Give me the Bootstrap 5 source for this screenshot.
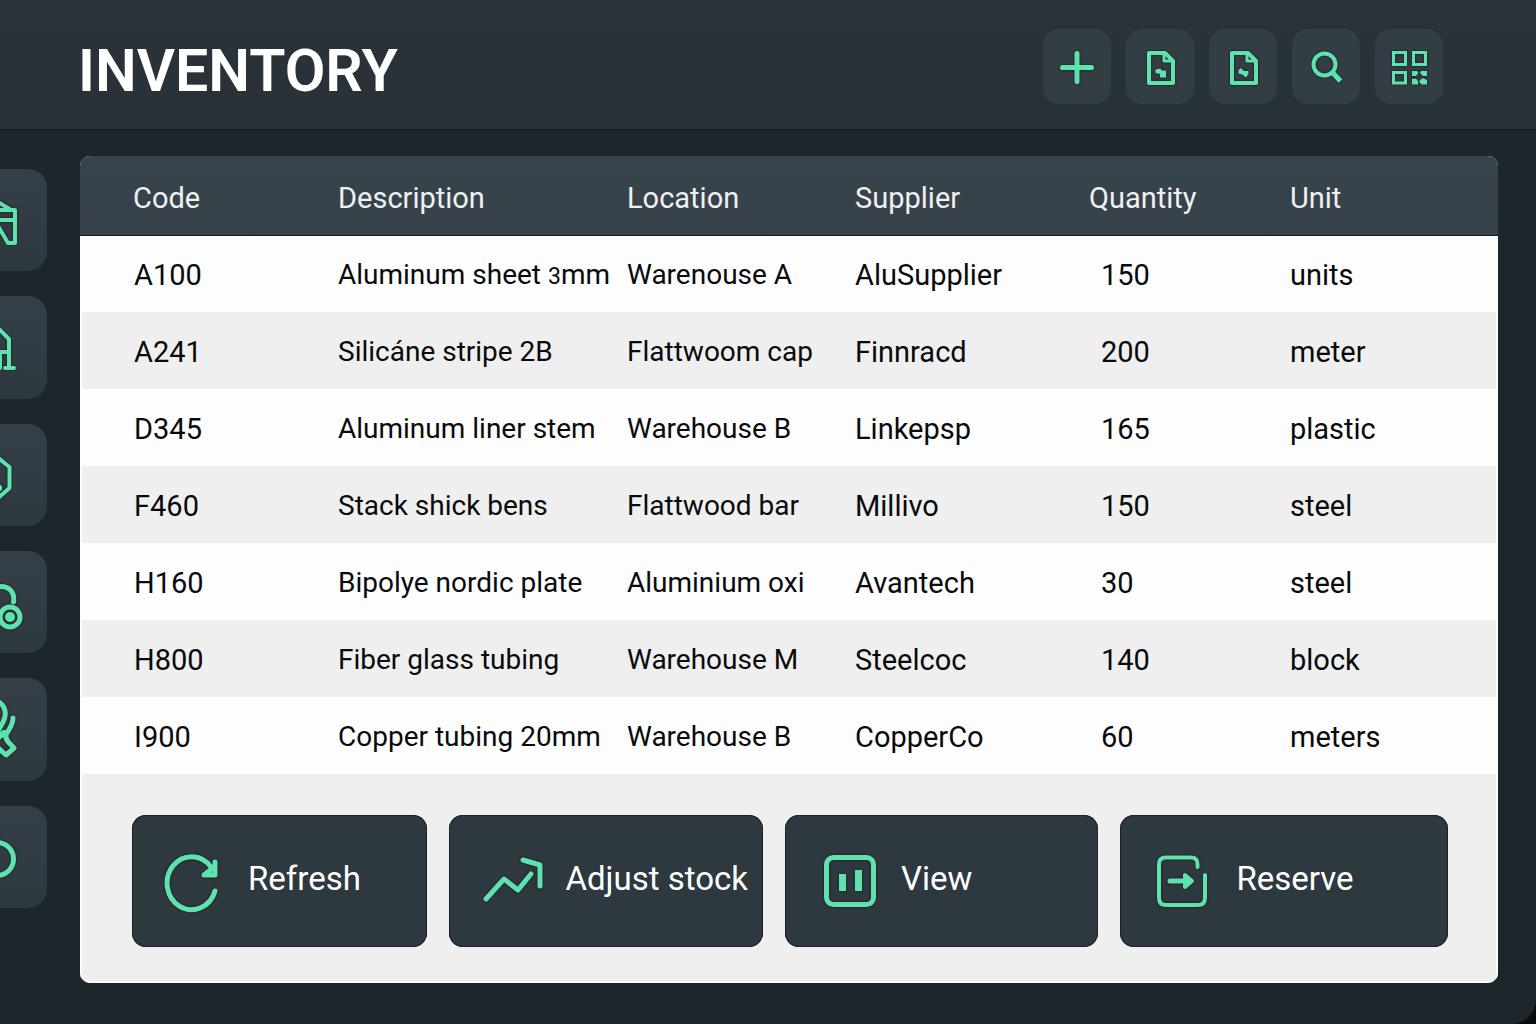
<!DOCTYPE html>
<html lang="en">
<head>
<meta charset="utf-8">
<meta name="viewport" content="width=device-width, initial-scale=1">
<title>Inventory</title>
<link href="https://cdn.jsdelivr.net/npm/bootstrap@5.3.0/dist/css/bootstrap.min.css" rel="stylesheet">
<style>
  body { background: #0c0a0b; font-family: Roboto, "Liberation Sans", sans-serif; }
  .app { background: #1d262b; border-bottom-right-radius: 24px; }
  .topbar { background: linear-gradient(#2a333a, #293138); height: 130px; padding: 0 93px 0 78px; border-bottom: 1px solid #171e22; }
  .topbar h1 { font-size: 59px; line-height: 64px; font-weight: 600; padding-top: 12px; }
  .tools { gap: 15px; padding-top: 3px; }
  .tool { width: 68px; height: 75px; padding: 0; border-radius: 16px; --bs-btn-border-width: 0; --bs-btn-bg: #323d44; --bs-btn-hover-bg: #3b474f; }
  .tool svg { width: 44px; height: 45px; }
  svg { display: block; flex: none; fill: none; stroke: #5ee3ad; stroke-width: 4; stroke-linecap: round; stroke-linejoin: round; filter: drop-shadow(0 0 1px #1a1018); }
  svg.heavy { stroke-width: 5; }
  .solid { fill: #5ee3ad; stroke: none; }
  .workspace { padding: 26px 38px 41px 0; }
  .side { width: 47px; margin-right: 33px; padding: 13px 0 75px; gap: 25px; }
  .side a { background: linear-gradient(#343f47, #2e383f); border-radius: 0 19px 19px 0; overflow: hidden; }
  .side svg { width: 47px; height: 102px; }
  .panel { background: #efefef; border-radius: 10px; overflow: hidden; }
  .stock { table-layout: fixed; border-collapse: separate; border-spacing: 0; font-size: 29px; line-height: 36px; --bs-table-bg: #fdfdfd; --bs-table-color: #080a0c; }
  .stock th, .stock td { padding: 2px 0 0; border: 0; vertical-align: middle; white-space: nowrap; }
  .stock th { height: 80px; padding-top: 5px; font-weight: 400; background: linear-gradient(#38444c, #36414a); color: #eef0f1; border-bottom: 1px solid #141c22; }
  .stock td { height: 77px; }
  .stock tbody tr:first-child td { height: 76px; }
  .stock tbody tr:nth-child(even) { --bs-table-bg: #efefef; }
  .stock th:first-child { padding-left: 53px; }
  .stock td:first-child { padding-left: 52px; border-left: 2px solid #fdfdfd; }
  .stock td:last-child { border-right: 2px solid #fdfdfd; }
  .stock td:nth-child(2), .stock td:nth-child(3) { font-size: 28px; }
  .stock td.qty { padding-left: 12px; }
  .stock .oldstyle { font-size: 23px; line-height: 1; }
  .actions { padding: 41px 48px 34px 50px; gap: 22px; border: solid #fdfdfd; border-width: 0 2px 2px; }
  .action { flex: 281 1 0; height: 132px; padding: 0 0 0 32px; gap: 20px; border-radius: 14px; font-size: 33px; line-height: 40px; white-space: nowrap;
    --bs-btn-border-width: 0; --bs-btn-bg: #2e383f; --bs-btn-color: #fff; --bs-btn-hover-bg: #3a464e; --bs-btn-hover-color: #fff; box-shadow: inset 0 0 0 1px #18222a; }
  .action svg { width: 64px; height: 64px; }
  .action span { padding-bottom: 5px; }
  .action-sm { flex-grow: 263; }
  .action-lg { flex-grow: 295; }
</style>
</head>
<body>
<div class="app min-vh-100 d-flex flex-column">
  <header class="topbar d-flex align-items-center justify-content-between">
    <h1 class="m-0 text-white">INVENTORY</h1>
    <div class="tools d-flex">
      <button type="button" class="tool btn d-flex align-items-center justify-content-center" aria-label="Add">
        <svg viewBox="0 0 44 45" class="heavy"><path d="M22 9.500V37.500M7.500 23.500H36.500"/></svg>
      </button>
      <button type="button" class="tool btn d-flex align-items-center justify-content-center" aria-label="Import file">
        <svg viewBox="0 0 44 45"><path d="M11 9H27L35 17V39H11Z"/><path d="M26 9V17H34" stroke-width="3"/><path class="solid" d="M17.500 25.500 22 24.500 24 26.500H28V33.500H22V30L17.500 29Z"/></svg>
      </button>
      <button type="button" class="tool btn d-flex align-items-center justify-content-center" aria-label="Export file">
        <svg viewBox="0 0 44 45"><path d="M11 9H27L35 17V39H11Z"/><path d="M26 9V17H34" stroke-width="3"/><path class="solid" d="M17.500 26 20 24 23 27H27.500V30L25 33.500 21 30.500 17.500 29.500Z"/></svg>
      </button>
      <button type="button" class="tool btn d-flex align-items-center justify-content-center" aria-label="Search">
        <svg viewBox="0 0 44 45"><circle cx="20.500" cy="20.500" r="11"/><path d="M28.500 28.500 36.500 37" stroke-width="5" stroke-linecap="butt"/></svg>
      </button>
      <button type="button" class="tool btn d-flex align-items-center justify-content-center" aria-label="Scan code">
        <svg viewBox="0 0 44 45"><path d="M6.500 8.500H18.500V20.500H6.500ZM26.500 8.500H38.500V20.500H26.500ZM6.500 28.500H18.500V39H6.500Z" stroke-width="3" stroke-linejoin="miter"/><path class="solid" d="M25 27H30L31.500 29 29 32H25ZM34 27H40V32H36L33 29ZM25 35 29 34.500 31 37V40.500H25ZM33 36 36 34 40 36V40.500H35L32 38Z"/></svg>
      </button>
    </div>
  </header>

  <div class="workspace d-flex flex-grow-1">
    <nav class="side d-flex flex-column flex-shrink-0" aria-label="Sections">
      <a href="#" class="flex-fill" aria-label="Structures"><svg viewBox="0 0 47 102"><path d="M-2 33 11 41H15V74H8L-2 57M-2 51H15M-2 41H11"/></svg></a>
      <a href="#" class="flex-fill" aria-label="Warehouses"><svg viewBox="0 0 47 102"><path d="M-3 31 9 43V72M-3 56H9M0 56V72M5 72H14"/></svg></a>
      <a href="#" class="flex-fill" aria-label="Materials"><svg viewBox="0 0 47 102"><path d="M-3 33 9.500 43V64L-3 75"/><path d="M-2 62 0 63V65"/></svg></a>
      <a href="#" class="flex-fill" aria-label="Coils"><svg viewBox="0 0 47 102" class="heavy"><path d="M-3 36C8 34 15 40 13.500 51"/><circle cx="10" cy="66" r="10"/><circle class="solid" cx="10" cy="66" r="5"/></svg></a>
      <a href="#" class="flex-fill" aria-label="Tools"><svg viewBox="0 0 47 102" class="heavy"><path d="M-3 23C6 27 7 37 3 44L-3 55M13 40C13 48 8 52 6 57C5 63 10 65 14 70L6 77-3 69"/><path d="M-3 60 4 55" stroke-width="6"/></svg></a>
      <a href="#" class="flex-fill" aria-label="Settings"><svg viewBox="0 0 47 102" class="heavy"><circle cx="-3" cy="53" r="16.500"/></svg></a>
    </nav>

    <main class="panel flex-grow-1 d-flex flex-column">
      <table class="stock table mb-0">
        <colgroup><col style="width:258px"><col style="width:289px"><col style="width:228px"><col style="width:234px"><col style="width:201px"><col style="width:208px"></colgroup>
        <thead>
          <tr><th scope="col">Code</th><th scope="col">Description</th><th scope="col">Location</th><th scope="col">Supplier</th><th scope="col">Quantity</th><th scope="col">Unit</th></tr>
        </thead>
        <tbody>
          <tr><td>A100</td><td>Aluminum sheet <span class="oldstyle">3</span>mm</td><td>Warenouse A</td><td>AluSupplier</td><td class="qty">150</td><td>units</td></tr>
          <tr><td>A241</td><td>Silicáne stripe 2B</td><td>Flattwoom cap</td><td>Finnracd</td><td class="qty">200</td><td>meter</td></tr>
          <tr><td>D345</td><td>Aluminum liner stem</td><td>Warehouse B</td><td>Linkepsp</td><td class="qty">165</td><td>plastic</td></tr>
          <tr><td>F460</td><td>Stack shick bens</td><td>Flattwood bar</td><td>Millivo</td><td class="qty">150</td><td>steel</td></tr>
          <tr><td>H160</td><td>Bipolye nordic plate</td><td>Aluminium oxi</td><td>Avantech</td><td class="qty">30</td><td>steel</td></tr>
          <tr><td>H800</td><td>Fiber glass tubing</td><td>Warehouse M</td><td>Steelcoc</td><td class="qty">140</td><td>block</td></tr>
          <tr><td>I900</td><td>Copper tubing 20mm</td><td>Warehouse B</td><td>CopperCo</td><td class="qty">60</td><td>meters</td></tr>
        </tbody>
      </table>
      <div class="actions d-flex flex-grow-1">
        <button type="button" class="action action-sm btn d-flex align-items-center">
          <svg viewBox="0 0 64 64" class="heavy"><path d="M51 42A24.500 26.500 0 1 1 47 18"/><path d="M51 13V26H40L50 18"/></svg>
          <span>Refresh</span>
        </button>
        <button type="button" class="action btn d-flex align-items-center">
          <svg viewBox="0 0 64 64" class="heavy"><path d="M5 50 23 30 37 41 50 25"/><path d="M42 11 59 16V37"/></svg>
          <span>Adjust stock</span>
        </button>
        <button type="button" class="action btn d-flex align-items-center">
          <svg viewBox="0 0 64 64" class="heavy"><rect x="9.500" y="8.500" width="47" height="47" rx="7"/><path class="solid" d="M22 25h7v17h-7zM38 21h7v21h-7z"/></svg>
          <span>View</span>
        </button>
        <button type="button" class="action action-lg btn d-flex align-items-center">
          <svg viewBox="0 0 64 64"><path d="M45.500 18V15Q45.500 8.500 39 8.500H14Q7 8.500 7 15V49Q7 56 14 56H46Q53 56 53 49V26"/><path d="M18 32H34" stroke-width="5"/><path d="M33 26V38L40 32Z" fill="#5ee3ad"/></svg>
          <span>Reserve</span>
        </button>
      </div>
    </main>
  </div>
</div>
<script src="https://cdn.jsdelivr.net/npm/bootstrap@5.3.0/dist/js/bootstrap.bundle.min.js"></script>
</body>
</html>
